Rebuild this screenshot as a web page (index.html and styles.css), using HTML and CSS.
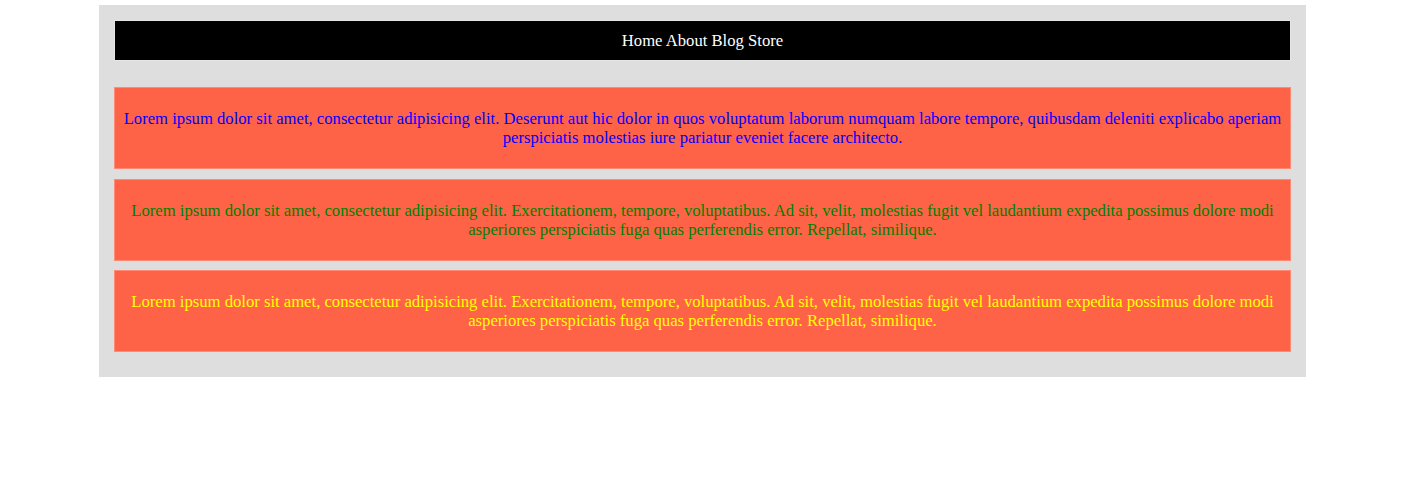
FILE: index.html
```html
<!DOCTYPE html>
<html lang="en">
<head>
<meta charset="utf-8">
<title>Layout</title>
<link rel="stylesheet" href="styles.css">
</head>
<body>
<div class="wrapper">
  <nav class="nav">
    <a href="#">Home</a> <a href="#">About</a> <a href="#">Blog</a> <a href="#">Store</a>
  </nav>
  <main class="cards">
    <div class="card card-blue">Lorem ipsum dolor sit amet, consectetur adipisicing elit. Deserunt aut hic dolor in quos voluptatum laborum numquam labore tempore, quibusdam deleniti explicabo aperiam perspiciatis molestias iure pariatur eveniet facere architecto.</div>
    <div class="card card-green">Lorem ipsum dolor sit amet, consectetur adipisicing elit. Exercitationem, tempore, voluptatibus. Ad sit, velit, molestias fugit vel laudantium expedita possimus dolore modi asperiores perspiciatis fuga quas perferendis error. Repellat, similique.</div>
    <div class="card card-yellow">Lorem ipsum dolor sit amet, consectetur adipisicing elit. Exercitationem, tempore, voluptatibus. Ad sit, velit, molestias fugit vel laudantium expedita possimus dolore modi asperiores perspiciatis fuga quas perferendis error. Repellat, similique.</div>
  </main>
</div>
</body>
</html>
```
FILE: styles.css
```css
html, body {
  margin: 0;
  padding: 0;
  background: #ffffff;
}
body {
  font-family: "Liberation Serif", "Times New Roman", serif;
  font-size: 16.65px;
  line-height: 19px;
}
.wrapper {
  width: 1207px;
  margin: 5px auto 0;
  padding: 15px 15px 25px;
  box-sizing: border-box;
  background: #dedede;
  display: flex;
  flex-direction: column;
  gap: 26px;
}
.nav {
  background: #000000;
  border: 1px solid #e6e6e6;
  padding: 10px 0 10px;
  text-align: center;
}
.nav a {
  color: #ffffff;
  text-decoration: none;
}
.cards {
  display: flex;
  flex-direction: column;
  gap: 9.5px;
}
.card {
  background: #ff6347;
  border: 1px solid #ff8a76;
  padding: 21px 2px 21px;
  text-align: center;
}
.card-blue { color: #0000ff; }
.card-green { color: #008000; }
.card-yellow { color: #ffff00; }
```
